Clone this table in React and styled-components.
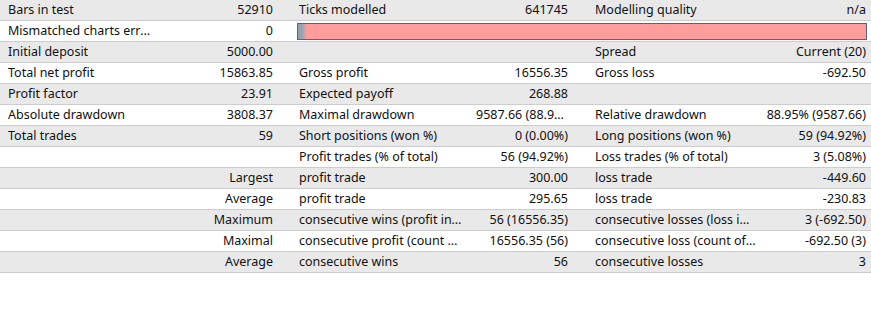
import React from "react";
import styled, { createGlobalStyle } from "styled-components";

const GlobalStyle = createGlobalStyle`
  html, body {
    margin: 0;
    padding: 0;
    background: #ffffff;
  }
  body {
    font-family: "Noto Sans", "Liberation Sans", sans-serif;
    font-size: 12.5px;
    color: #111111;
  }
`;

const Report = styled.div`
  width: 871px;
  height: 333px;
  overflow: hidden;
  background: #ffffff;
`;

const Row = styled.div`
  display: grid;
  grid-template-columns: 154px 137px 181px 114px 174px 111px;
  height: 20px;
  border-bottom: 1px solid #cdcdcd;
  background: ${props => (props.$shaded ? "#e9e9e9" : "#ffffff")};
  align-items: center;
`;

const Label = styled.div`
  padding: 0 ${props => props.$pr || 3}px 0 ${props => props.$pad || 8}px;
  white-space: nowrap;
  overflow: hidden;
  text-overflow: ellipsis;
  line-height: 20px;
`;

const Value = styled.div`
  padding: 0 ${props => props.$pr || 18}px 0 ${props => props.$pl || 4}px;
  white-space: nowrap;
  overflow: hidden;
  text-overflow: ellipsis;
  text-align: right;
  line-height: 20px;
`;

const BarCell = styled.div`
  grid-column: 3 / span 4;
  padding: 0 4px 0 6px;
  height: 20px;
  display: flex;
  align-items: center;
`;

const Bar = styled.div`
  height: 17px;
  width: 570px;
  box-sizing: border-box;
  border: 1px solid #4f6882;
  background: linear-gradient(
    to right,
    #8d9fb2 0px,
    #98a3b0 4px,
    #ff9c9c 9px,
    #ff9d9d 100%
  );
`;

const rows = [
  ["Bars in test", "52910", "Ticks modelled", "641745", "Modelling quality", "n/a"],
  null,
  ["Initial deposit", "5000.00", "", "", "Spread", "Current (20)"],
  ["Total net profit", "15863.85", "Gross profit", "16556.35", "Gross loss", "-692.50"],
  ["Profit factor", "23.91", "Expected payoff", "268.88", "", ""],
  ["Absolute drawdown", "3808.37", "Maximal drawdown", "9587.66 (88.95%)", "Relative drawdown", "88.95% (9587.66)"],
  ["Total trades", "59", "Short positions (won %)", "0 (0.00%)", "Long positions (won %)", "59 (94.92%)"],
  ["", "", "Profit trades (% of total)", "56 (94.92%)", "Loss trades (% of total)", "3 (5.08%)"],
  ["", "Largest", "profit trade", "300.00", "loss trade", "-449.60"],
  ["", "Average", "profit trade", "295.65", "loss trade", "-230.83"],
  ["", "Maximum", "consecutive wins (profit in money)", "56 (16556.35)", "consecutive losses (loss in money)", "3 (-692.50)"],
  ["", "Maximal", "consecutive profit (count of wins)", "16556.35 (56)", "consecutive loss (count of losses)", "-692.50 (3)"],
  ["", "Average", "consecutive wins", "56", "consecutive losses", "3"],
];

const App = () => (
  <Report>
    <GlobalStyle />
    {rows.map((r, i) =>
      r === null ? (
        <Row key={i} $shaded={i % 2 === 0}>
          <Label $pr={1}>Mismatched charts errors</Label>
          <Value>0</Value>
          <BarCell>
            <Bar />
          </BarCell>
        </Row>
      ) : (
        <Row key={i} $shaded={i % 2 === 0}>
          <Label>{r[0]}</Label>
          <Value>{r[1]}</Value>
          <Label $pr={8}>{r[2]}</Label>
          <Value>{r[3]}</Value>
          <Label $pad={9} $pr={4}>{r[4]}</Label>
          <Value $pr={5} $pl={1}>{r[5]}</Value>
        </Row>
      )
    )}
  </Report>
);

export default App;
